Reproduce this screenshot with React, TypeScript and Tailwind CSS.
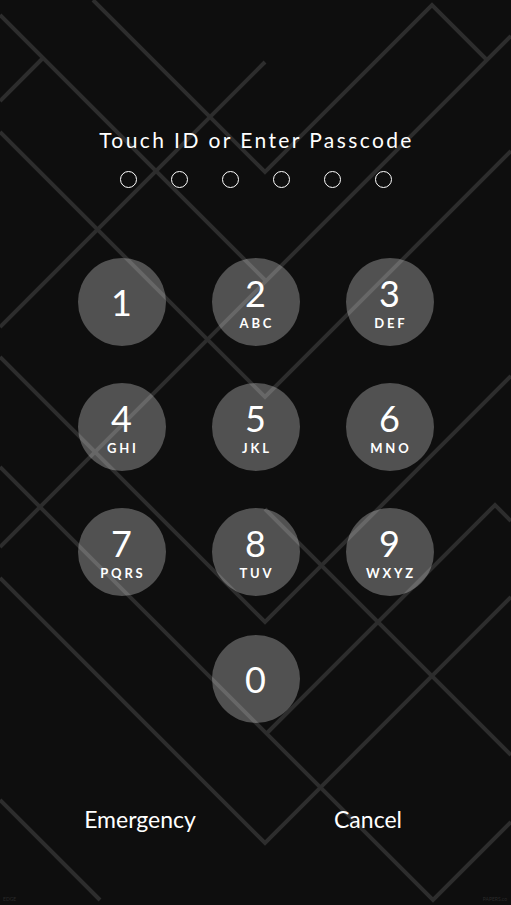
const keys = [
  { digit: "1", letters: "" },
  { digit: "2", letters: "ABC" },
  { digit: "3", letters: "DEF" },
  { digit: "4", letters: "GHI" },
  { digit: "5", letters: "JKL" },
  { digit: "6", letters: "MNO" },
  { digit: "7", letters: "PQRS" },
  { digit: "8", letters: "TUV" },
  { digit: "9", letters: "WXYZ" },
];

// wallpaper strokes, 45 degree lines
const lines = [
  "93,0 265,172 432,5 487,60",
  "0,15 265,280",
  "43,58 0,101",
  "511,36 0,547",
  "265,62 0,327",
  "0,132 265,397 511,151",
  "0,357 265,622 511,376",
  "0,467 433,900 511,822",
  "0,578 265,843 511,597",
  "0,800 100,900",
  "265,509 511,755",
  "267,733 495,505 511,521",
];

function Wallpaper() {
  return (
    <svg
      className="absolute inset-0"
      width="511"
      height="905"
      viewBox="0 0 511 905"
      aria-hidden="true"
    >
      {lines.map((pts) => (
        <polyline
          key={pts}
          points={pts}
          fill="none"
          stroke="#2d2d2d"
          strokeWidth="4"
          strokeLinejoin="miter"
        />
      ))}
    </svg>
  );
}

function Key({ digit, letters }: { digit: string; letters: string }) {
  return (
    <button className="w-[88px] h-[88px] rounded-full bg-[rgba(255,255,255,0.28)] flex flex-col items-center justify-center text-white">
      <span className="text-[36px] leading-none">{digit}</span>
      {letters && (
        <span className="text-[13px] font-bold tracking-[2.8px] leading-none mt-[6px] pl-[2.8px]">
          {letters}
        </span>
      )}
    </button>
  );
}

export default function App() {
  return (
    <div className="relative w-[511px] h-[905px] overflow-hidden bg-[#0e0e0e] font-[Lato,sans-serif]">
      <Wallpaper />

      <div className="relative flex flex-col items-center">
        {/* Prompt */}
        <h1 className="mt-[126px] pl-[2px] text-[21px] leading-[28px] tracking-[2.4px] text-white">
          Touch ID or Enter Passcode
        </h1>
        <div className="mt-[17px] flex gap-[34px]">
          {[0, 1, 2, 3, 4, 5].map((i) => (
            <span key={i} className="w-[17px] h-[17px] rounded-full border-[1.5px] border-white" />
          ))}
        </div>

        {/* Keypad */}
        <div className="mt-[70px] grid grid-cols-[88px_88px_88px] gap-x-[46px] gap-y-[37px]">
          {keys.map((k) => (
            <Key key={k.digit} digit={k.digit} letters={k.letters} />
          ))}
        </div>
        <div className="mt-[39px]">
          <Key digit="0" letters="" />
        </div>

        {/* Bottom actions */}
        <div className="mt-[80px] w-full flex pl-[50px] gap-[48px]">
          <button className="w-[180px] text-[23px] leading-[32px] text-white">Emergency</button>
          <button className="w-[180px] text-[23px] leading-[32px] text-white">Cancel</button>
        </div>
      </div>

      <span className="absolute left-[3px] bottom-[3px] text-[5px] leading-none text-[#2a2a2a]">EDGE</span>
      <span className="absolute right-[4px] bottom-[3px] text-[5px] leading-none text-[#2a2a2a]">PAPERS.co</span>
    </div>
  );
}
